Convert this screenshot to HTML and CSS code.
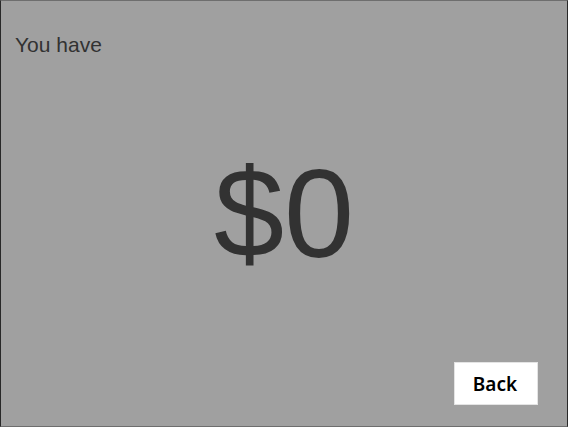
FILE: index.html
```html
<!DOCTYPE html>
<html lang="en">
<head>
<meta charset="utf-8">
<meta name="viewport" content="width=device-width, initial-scale=1">
<title>Balance</title>
<link rel="stylesheet" href="styles.css">
</head>
<body>
<main class="screen">
  <h1 class="label">You have</h1>
  <p class="amount">$0</p>
  <button class="back" type="button">Back</button>
</main>
</body>
</html>
```
FILE: styles.css
```css
* {
  box-sizing: border-box;
}

body {
  margin: 0;
  background: #a0a0a0;
  color: #323232;
  font-family: "Liberation Sans", Arial, sans-serif;
}

.screen {
  display: grid;
  grid-template-rows: 48px 1fr 43px;
  min-height: 100vh;
  padding: 20px 29px 21px 14px;
  border: 1px solid #6e6e6e;
  border-left-color: #282828;
  border-right-color: #282828;
}

.label {
  margin: 0;
  font-size: 21px;
  font-weight: 400;
  line-height: 48px;
}

.amount {
  align-self: center;
  margin: 0 0 4px 15px;
  font-size: 126px;
  line-height: 144px;
  text-align: center;
}

.back {
  justify-self: end;
  width: 84px;
  height: 43px;
  padding: 0 2px 0 0;
  border: 1px solid #e4e4e4;
  background: #fff;
  color: #000;
  font-family: "Noto Sans", sans-serif;
  font-size: 19px;
  font-weight: 600;
}
```
